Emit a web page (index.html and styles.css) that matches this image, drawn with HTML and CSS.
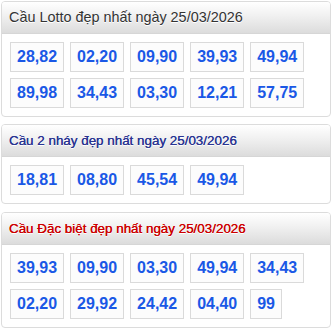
FILE: index.html
```html
<!DOCTYPE html>
<html lang="vi">
<head>
<meta charset="utf-8">
<title>Cầu lô</title>
<link rel="stylesheet" href="styles.css">
</head>
<body>
<div class="panel">
  <div class="panel-head">Cầu Lotto đẹp nhất ngày 25/03/2026</div>
  <div class="panel-body">
    <span class="num">28,82</span><span class="num">02,20</span><span class="num">09,90</span><span class="num">39,93</span><span class="num">49,94</span>
    <span class="num">89,98</span><span class="num">34,43</span><span class="num">03,30</span><span class="num">12,21</span><span class="num">57,75</span>
  </div>
</div>
<div class="panel panel-wide-gap">
  <div class="panel-head head-blue">Cầu 2 nháy đẹp nhất ngày 25/03/2026</div>
  <div class="panel-body">
    <span class="num">18,81</span><span class="num">08,80</span><span class="num">45,54</span><span class="num">49,94</span>
  </div>
</div>
<div class="panel">
  <div class="panel-head head-red">Cầu Đặc biệt đẹp nhất ngày 25/03/2026</div>
  <div class="panel-body">
    <span class="num">39,93</span><span class="num">09,90</span><span class="num">03,30</span><span class="num">49,94</span><span class="num">34,43</span>
    <span class="num">02,20</span><span class="num">29,92</span><span class="num">24,42</span><span class="num">04,40</span><span class="num">99</span>
  </div>
</div>
</body>
</html>
```
FILE: styles.css
```css
html, body {
  margin: 0;
  padding: 0;
  background: #fff;
}
body {
  padding: 1px 3px 0 1px;
  font-family: Arial, "Liberation Sans", sans-serif;
}
.panel {
  border: 1px solid #dcdcdc;
  border-radius: 4px;
  margin-bottom: 7px;
  background: #fff;
  overflow: hidden;
}
.panel-wide-gap {
  margin-bottom: 8px;
}
.panel-head {
  height: 31px;
  line-height: 31px;
  padding-left: 7px;
  font-size: 14.4px;
  color: #333;
  background: linear-gradient(to bottom, #ffffff 0%, #f2f2f2 40%, #dcdcdc 100%);
  border-bottom: 1px solid #d6d6d6;
  text-shadow: 0 1px 0 #fff;
  white-space: nowrap;
}
.head-blue {
  color: #2a3592;
  font-size: 13.4px;
  text-shadow: 0 0 0.4px #2a3592, 0 1px 0 #fff;
}
.head-red {
  color: #cc0000;
  font-size: 13.4px;
  text-shadow: 0 0 0.4px #cc0000, 0 1px 0 #fff;
}
.panel-body {
  display: flex;
  flex-wrap: wrap;
  gap: 6px;
  padding: 8px;
}
.num {
  display: block;
  height: 28px;
  line-height: 28px;
  padding: 0 6px;
  border: 1px solid #dadada;
  background: #fcfcfc;
  color: #1a58e6;
  font-weight: bold;
  font-size: 16px;
}
```
